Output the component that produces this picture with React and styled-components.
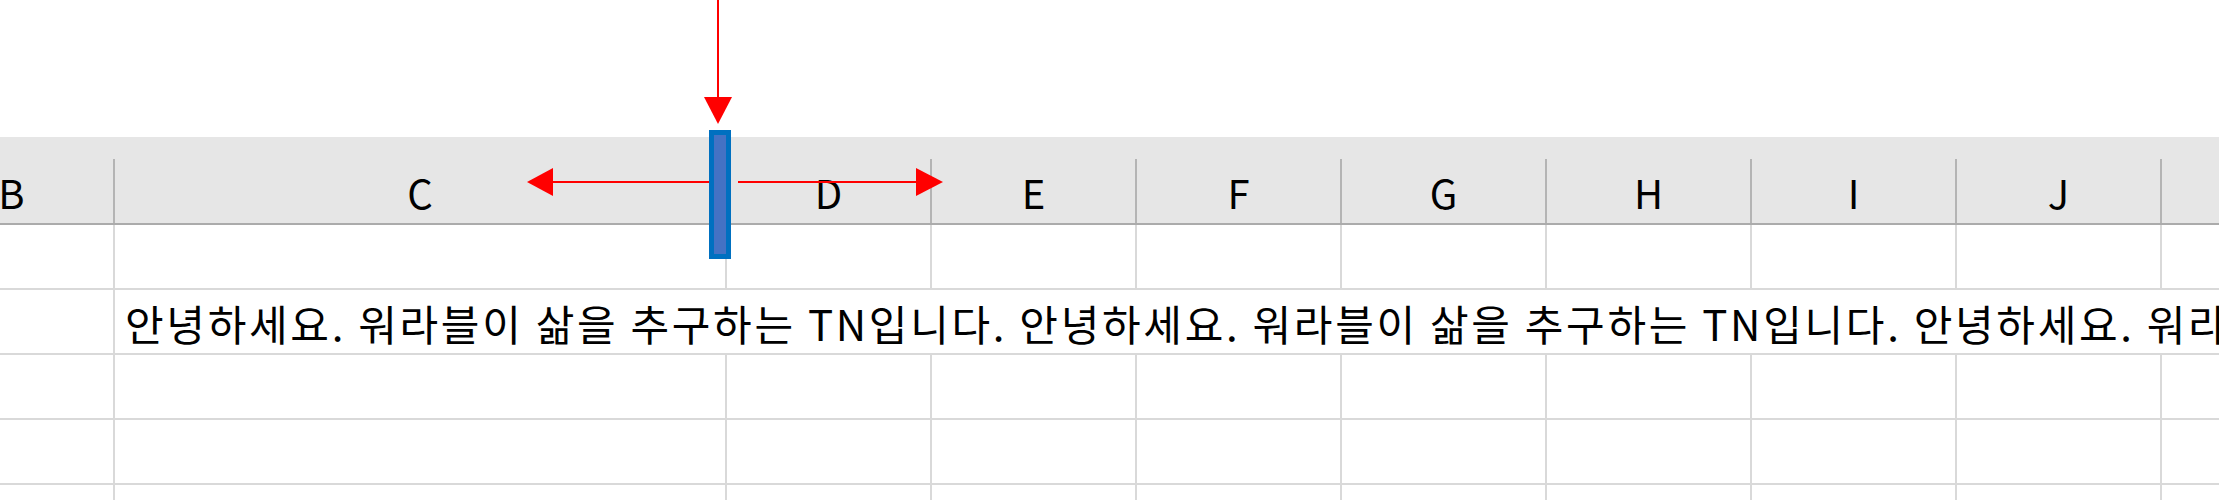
import React from "react";
import styled, { createGlobalStyle } from "styled-components";

const GlobalStyle = createGlobalStyle`
  html, body {
    margin: 0;
    padding: 0;
    background: #ffffff;
  }
  * {
    box-sizing: border-box;
  }
`;

const columns = [
  { name: "B", width: 205 },
  { name: "C", width: 612 },
  { name: "D", width: 205 },
  { name: "E", width: 205 },
  { name: "F", width: 205 },
  { name: "G", width: 205 },
  { name: "H", width: 205 },
  { name: "I", width: 205 },
  { name: "J", width: 205 },
  { name: "K", width: 205 },
];

const sentence = "안녕하세요. 워라블이 삶을 추구하는 TN입니다. ";

const Page = styled.div`
  position: relative;
  width: 2219px;
  height: 500px;
  overflow: hidden;
  font-family: "Noto Sans CJK KR", "Noto Sans", sans-serif;
  color: #000000;
`;

const TopSpace = styled.div`
  height: 137px;
`;

const HeaderBand = styled.div`
  background: #e6e6e6;
  padding-top: 22px;
  border-bottom: 2px solid #ababab;
`;

const Track = styled.div`
  display: flex;
  margin-left: -90px;
`;

const HeadCell = styled.div`
  flex: 0 0 ${(p) => p.$w}px;
  height: 64px;
  border-right: 2px solid #b4b4b4;
  display: flex;
  align-items: center;
  justify-content: center;
  font-size: 40px;
  line-height: 1;
  padding-top: 2px;
`;

const Row = styled.div`
  display: flex;
  margin-left: -90px;
  height: 65px;
  border-bottom: 2px solid #d9d9d9;
`;

const Cell = styled.div`
  flex: 0 0 ${(p) => p.$w}px;
  border-right: 2px solid #d9d9d9;
`;

const TextCell = styled.div`
  flex: 1 1 auto;
  min-width: 0;
  overflow: hidden;
  white-space: nowrap;
  padding-left: 10px;
  display: flex;
  align-items: center;
  padding-top: 2px;
  font-size: 42px;
  line-height: 1;
  letter-spacing: 2.7px;
`;

const Overlay = styled.svg`
  position: absolute;
  left: 0;
  top: 0;
  pointer-events: none;
`;

const Marker = styled.div`
  position: absolute;
  left: 709px;
  top: 130px;
  width: 22px;
  height: 129px;
  background: #4472c4;
  border: 5px solid #0070c0;
`;

function HeaderRow() {
  return (
    <HeaderBand>
      <Track>
        {columns.map((c) => (
          <HeadCell key={c.name} $w={c.width}>
            {c.name}
          </HeadCell>
        ))}
      </Track>
    </HeaderBand>
  );
}

function EmptyRow() {
  return (
    <Row>
      {columns.map((c) => (
        <Cell key={c.name} $w={c.width} />
      ))}
    </Row>
  );
}

function TextRow() {
  return (
    <Row>
      <Cell $w={columns[0].width} />
      <TextCell>{sentence.repeat(3)}</TextCell>
    </Row>
  );
}

function Arrows() {
  return (
    <Overlay width="2219" height="500" viewBox="0 0 2219 500">
      <g fill="#ff0000" stroke="none">
        <rect x="717" y="0" width="2" height="100" />
        <polygon points="704,97 732,97 718,124" />
        <rect x="550" y="181" width="159" height="2" />
        <polygon points="553,168 553,196 527,182" />
        <rect x="738" y="181" width="180" height="2" />
        <polygon points="916,168 916,196 943,182" />
      </g>
    </Overlay>
  );
}

export default function App() {
  return (
    <>
      <GlobalStyle />
      <Page>
        <TopSpace />
        <HeaderRow />
        <EmptyRow />
        <TextRow />
        <EmptyRow />
        <EmptyRow />
        <EmptyRow />
        <Arrows />
        <Marker />
      </Page>
    </>
  );
}
